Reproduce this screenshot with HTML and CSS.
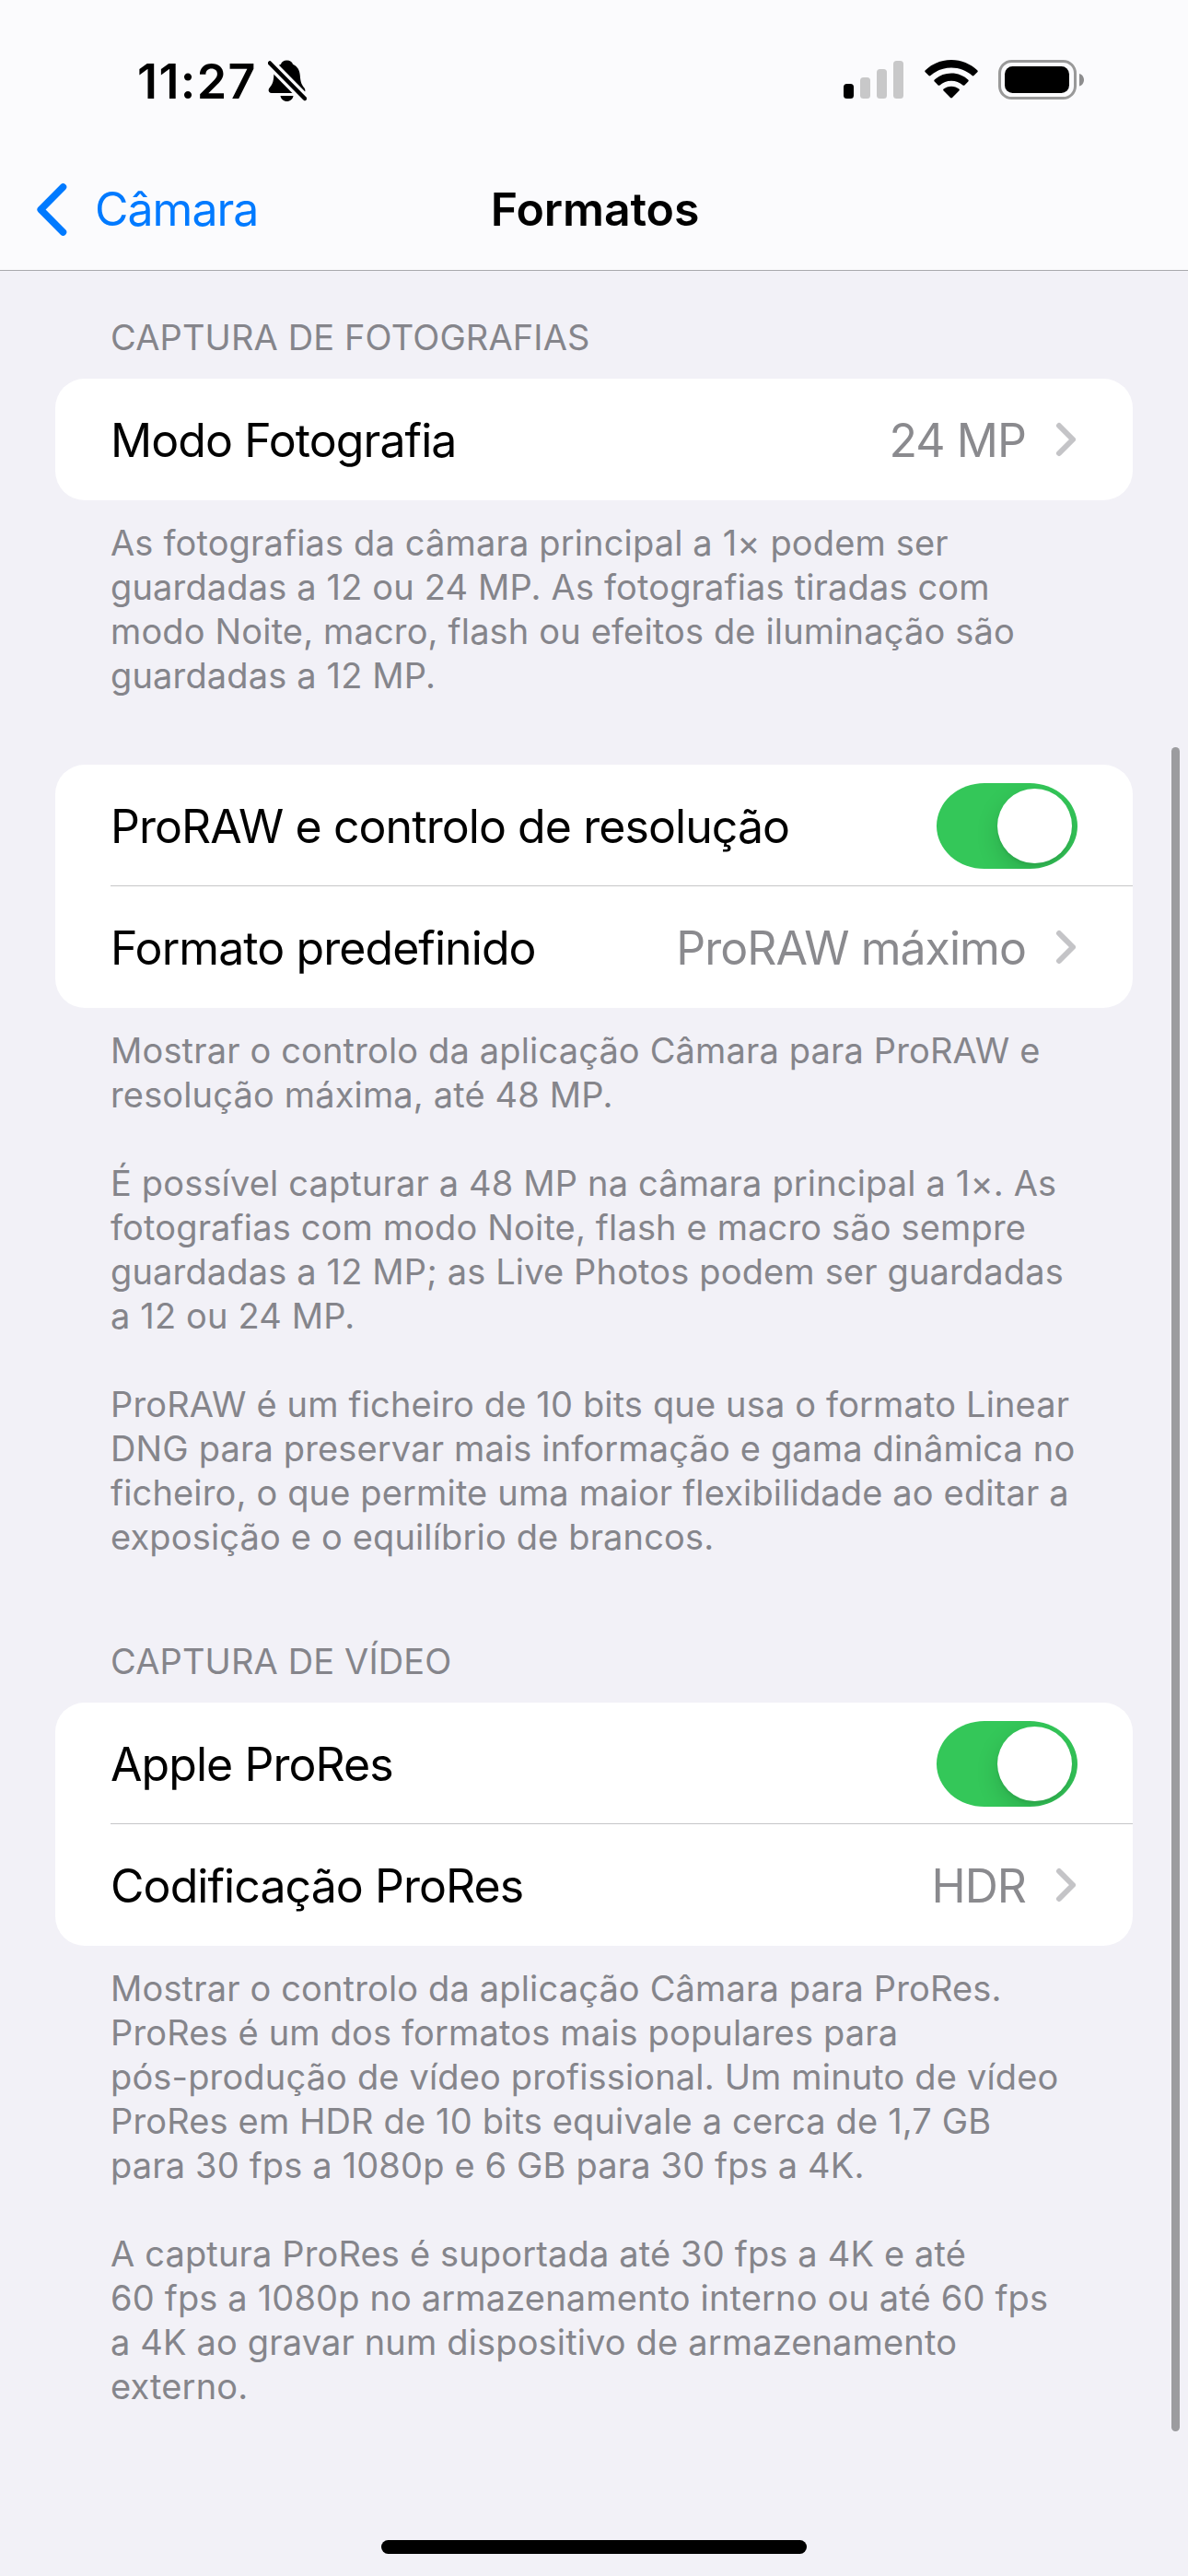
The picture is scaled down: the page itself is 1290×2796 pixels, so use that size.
FILE: index.html
```html
<!DOCTYPE html>
<html lang="pt-PT">
<head>
    <meta charset="UTF-8">
    <meta name="viewport" content="width=device-width, initial-scale=1.0">
    <title>Formatos</title>
    <link rel="stylesheet" href="styles.css">
</head>
<body>

<header>
    <!-- Status bar -->
    <div class="status-bar">
        <div class="status-left">
            <span class="time">11:27</span>
            <svg class="bell" viewBox="0 0 42 45" width="42" height="45">
                <path d="M20.500 0.500C24 0.500 26.300 2.300 27 4.800C32 7 34.500 11.500 34.800 17C35.200 24.500 37 27.500 39.300 30.300C41 32.500 41 36 37.500 36H4C0.300 36 -0.200 32.500 1.700 30.300C4.500 27 6 24 6.300 17C6.600 11 9.500 6.700 14 4.800C14.700 2.300 17 0.500 20.500 0.500Z"/>
                <path d="M13.500 39H27.500C27 42.500 24 45 20.500 45S14 42.500 13.500 39Z"/>
                <path class="bell-gap" d="M2 3.500L40 42"/>
                <path class="bell-slash" d="M2 3.500L40 42"/>
            </svg>
        </div>
        <div class="status-right">
            <svg class="signal" viewBox="0 0 65 42" width="65" height="42">
                <rect x="0" y="26" width="11" height="16" rx="3.500"/>
                <g fill="#c8c8c9">
                    <rect x="18" y="19" width="11" height="23" rx="3.500"/>
                    <rect x="36" y="10" width="11" height="32" rx="3.500"/>
                    <rect x="54" y="1" width="11" height="41" rx="3.500"/>
                </g>
            </svg>
            <svg class="wifi" viewBox="0 0 58 42" width="58" height="42">
                <path d="M29 0C40 0 49.800 4.300 57.200 11.300C57.900 12 57.900 12.700 57.300 13.300L53.500 17.100C52.900 17.700 52.200 17.700 51.600 17.100C45.500 11.500 37.600 8.500 29 8.500S12.500 11.500 6.400 17.100C5.800 17.700 5.100 17.700 4.500 17.100L0.700 13.300C0.100 12.700 0.100 12 0.800 11.300C8.200 4.300 18 0 29 0Z"/>
                <path d="M29 14.500C36.300 14.500 42.500 17.200 47.200 21.500C47.900 22.200 47.900 22.900 47.300 23.500L43.400 27.400C42.800 28 42.100 28 41.500 27.400C38.100 24.400 33.800 22.700 29 22.700S19.900 24.400 16.500 27.400C15.900 28 15.200 28 14.600 27.400L10.700 23.500C10.100 22.900 10.100 22.200 10.800 21.500C15.500 17.200 21.700 14.500 29 14.500Z"/>
                <path d="M29 28.700C32.300 28.700 35.100 29.800 37.300 31.600C38 32.300 38 33 37.400 33.600L30 41.100C29.400 41.700 28.600 41.700 28 41.100L20.600 33.600C20 33 20 32.300 20.700 31.600C22.900 29.800 25.700 28.700 29 28.700Z"/>
            </svg>
            <svg class="battery" viewBox="0 0 94 43" width="94" height="43">
                <rect x="1.500" y="1.500" width="82" height="40" rx="13" fill="none" stroke="#999999" stroke-width="3"/>
                <rect x="7" y="7" width="70" height="29" rx="8.500"/>
                <path d="M88 15C91.500 16 93 19 93 21.700S91.500 27.500 88 28.500Z" fill="#8d8d8e"/>
            </svg>
        </div>
    </div>

    <!-- Navigation bar -->
    <nav class="nav-bar">
        <a class="back" href="#">
            <svg viewBox="0 0 34 58" width="34" height="58">
                <path d="M28.500 5L4.200 29.500L28.500 54" fill="none" stroke="#007aff" stroke-width="7.500" stroke-linecap="round" stroke-linejoin="round"/>
            </svg>
            <span>Câmara</span>
        </a>
        <h1>Formatos</h1>
    </nav>
</header>

<main>
    <!-- Photo section -->
    <section>
        <h2>CAPTURA DE FOTOGRAFIAS</h2>
        <div class="card">
            <div class="row">
                <span class="label">Modo Fotografia</span>
                <span class="value">24 MP</span>
                <svg class="chevron" viewBox="0 0 22 38" width="22" height="38"><path d="M4 4L19 19L4 34"/></svg>
            </div>
        </div>
        <div class="note">
            <p>As fotografias da câmara principal a 1× podem ser<br>
            guardadas a 12 ou 24 MP. As fotografias tiradas com<br>
            modo Noite, macro, flash ou efeitos de iluminação são<br>
            guardadas a 12 MP.</p>
        </div>
    </section>

    <!-- ProRAW section -->
    <section class="proraw">
        <div class="card">
            <div class="row">
                <span class="label">ProRAW e controlo de resolução</span>
                <span class="toggle"><span class="knob"></span></span>
            </div>
            <div class="row">
                <span class="label">Formato predefinido</span>
                <span class="value">ProRAW máximo</span>
                <svg class="chevron" viewBox="0 0 22 38" width="22" height="38"><path d="M4 4L19 19L4 34"/></svg>
            </div>
        </div>
        <div class="note">
            <p>Mostrar o controlo da aplicação Câmara para ProRAW e<br>
            resolução máxima, até 48 MP.</p>
            <p>É possível capturar a 48 MP na câmara principal a 1×. As<br>
            fotografias com modo Noite, flash e macro são sempre<br>
            guardadas a 12 MP; as Live Photos podem ser guardadas<br>
            a 12 ou 24 MP.</p>
            <p>ProRAW é um ficheiro de 10 bits que usa o formato Linear<br>
            DNG para preservar mais informação e gama dinâmica no<br>
            ficheiro, o que permite uma maior flexibilidade ao editar a<br>
            exposição e o equilíbrio de brancos.</p>
        </div>
    </section>

    <!-- Video section -->
    <section class="video">
        <h2>CAPTURA DE VÍDEO</h2>
        <div class="card">
            <div class="row">
                <span class="label">Apple ProRes</span>
                <span class="toggle"><span class="knob"></span></span>
            </div>
            <div class="row">
                <span class="label">Codificação ProRes</span>
                <span class="value">HDR</span>
                <svg class="chevron" viewBox="0 0 22 38" width="22" height="38"><path d="M4 4L19 19L4 34"/></svg>
            </div>
        </div>
        <div class="note">
            <p>Mostrar o controlo da aplicação Câmara para ProRes.<br>
            ProRes é um dos formatos mais populares para<br>
            pós-produção de vídeo profissional. Um minuto de vídeo<br>
            ProRes em HDR de 10 bits equivale a cerca de 1,7 GB<br>
            para 30 fps a 1080p e 6 GB para 30 fps a 4K.</p>
            <p>A captura ProRes é suportada até 30 fps a 4K e até<br>
            60 fps a 1080p no armazenamento interno ou até 60 fps<br>
            a 4K ao gravar num dispositivo de armazenamento<br>
            externo.</p>
        </div>
    </section>
</main>

<div class="scrollbar"></div>
<div class="home-indicator"></div>

</body>
</html>
```
FILE: styles.css
```css
* {
    box-sizing: border-box;
}
body {
    margin: 0;
    position: relative;
    width: 1290px;
    height: 2796px;
    overflow: hidden;
    background-color: #f2f1f7;
    font-family: Inter, "Liberation Sans", sans-serif;
    color: #000;
}
header {
    height: 294px;
    background-color: #fbfbfd;
    border-bottom: 1px solid #a9a9ad;
}
/* Status bar */
.status-bar {
    display: flex;
    justify-content: space-between;
    height: 162px;
    padding: 65px 112px 0 149px;
}
.status-left,
.status-right {
    display: flex;
    align-items: flex-start;
}
.time {
    width: 142px;
    font-size: 52px;
    line-height: 47px;
    font-weight: 600;
    letter-spacing: 1.4px;
    white-space: nowrap;
}
.bell-gap {
    stroke: #fbfbfd;
    stroke-width: 11;
}
.bell-slash {
    stroke: #000;
    stroke-width: 4.5;
    stroke-linecap: round;
}
.wifi {
    margin-left: 23px;
}
.battery {
    margin-left: 22px;
}
/* Navigation bar */
.nav-bar {
    display: grid;
    grid-template-columns: 1fr auto 1fr;
    align-items: center;
    height: 129px;
    padding: 0 40px;
}
.back {
    display: flex;
    align-items: center;
    gap: 29px;
    color: #007aff;
    font-size: 50px;
    letter-spacing: -1px;
    text-decoration: none;
}
h1 {
    margin: 0;
    padding-left: 2px;
    font-size: 50px;
    font-weight: 600;
    letter-spacing: -0.1px;
}
/* Settings groups */
main {
    padding: 48px 60px 0;
}
h2 {
    margin: 0;
    padding: 0 60px 21px;
    font-size: 38px;
    line-height: 48px;
    font-weight: 400;
    letter-spacing: 0.13px;
    color: #85858b;
}
.card {
    background-color: #fff;
    border-radius: 32px;
}
.row {
    display: flex;
    align-items: center;
    height: 132px;
    margin-left: 60px;
    padding-right: 60px;
    font-size: 50px;
    letter-spacing: -0.93px;
    white-space: nowrap;
}
.row:not(:last-child) {
    height: 131px;
    padding-top: 2px;
}
.row + .row {
    height: 133px;
    border-top: 1px solid #c6c6c8;
}
.label {
    flex: 1;
    padding-top: 1px;
}
.value {
    margin-right: 32px;
    padding-top: 1px;
    color: #8a8a8e;
    letter-spacing: -0.95px;
}
.chevron {
    margin-right: 2px;
}
.chevron path {
    fill: none;
    stroke: #c4c4c7;
    stroke-width: 6;
    stroke-linecap: round;
    stroke-linejoin: round;
}
.toggle {
    display: flex;
    justify-content: flex-end;
    width: 153px;
    height: 93px;
    padding: 6px;
    border-radius: 52px / 46.5px;
    background-color: #34c759;
    overflow: hidden;
}
.knob {
    width: 81px;
    height: 81px;
    border-radius: 50%;
    background-color: #fff;
    box-shadow: 0 9px 24px rgba(0, 0, 0, 0.15), 0 3px 3px rgba(0, 0, 0, 0.06);
}
.note {
    padding: 22px 0 0 60px;
    font-size: 38px;
    line-height: 48px;
    letter-spacing: 0.15px;
    color: #85858b;
    white-space: nowrap;
}
.note p {
    margin: 0 0 48px;
}
.note p:last-child {
    margin-bottom: 0;
}
.proraw {
    margin-top: 73px;
}
.video {
    margin-top: 87px;
}
/* Overlays */
.scrollbar {
    position: absolute;
    top: 811px;
    right: 9px;
    width: 9px;
    height: 1828px;
    border-radius: 5px;
    background-color: #9c9c9f;
}
.home-indicator {
    position: absolute;
    bottom: 24px;
    left: 414px;
    width: 462px;
    height: 15px;
    border-radius: 8px;
    background-color: #000;
}
```
